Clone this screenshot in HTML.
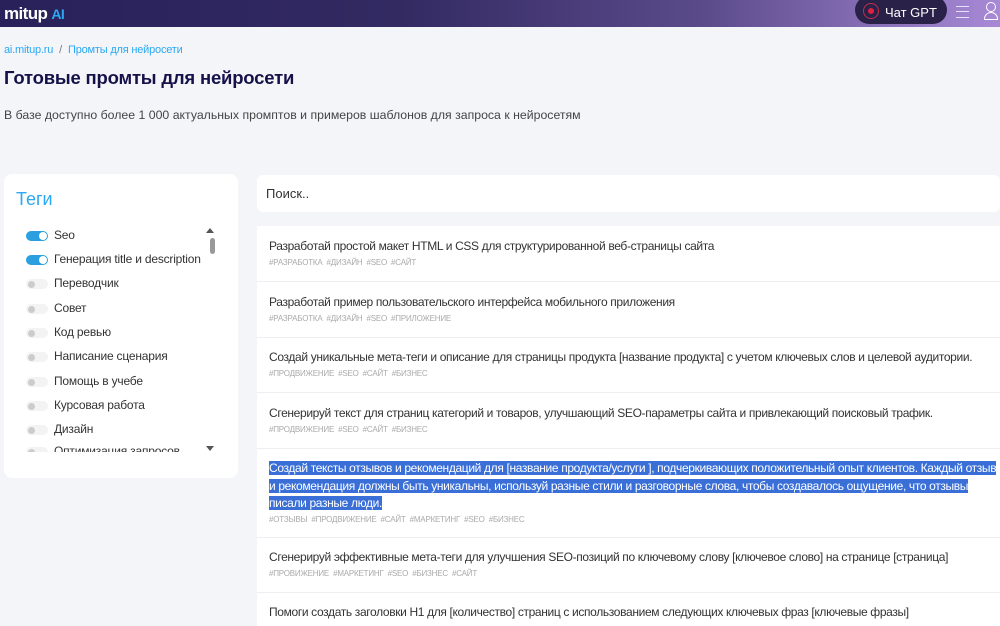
<!DOCTYPE html>
<html><head><meta charset="utf-8"><style>
*{margin:0;padding:0;box-sizing:border-box}
body{width:1000px;height:626px;overflow:hidden;background:#f4f5f9;font-family:"Liberation Sans",sans-serif;color:#333;position:relative}
.hdr{position:absolute;left:0;top:0;width:1000px;height:27px;background:linear-gradient(90deg,#28215a 0%,#332a62 40%,#5a4a8a 70%,#a889d6 100%)}
.logo{position:absolute;left:4px;top:4px;font-weight:bold;font-size:17px;color:#fff;letter-spacing:-0.6px}
.logo span{color:#2aa8f2;font-size:14px}
.gpt{position:absolute;left:855px;top:-4px;width:92px;height:28px;border-radius:14px;background:#2a2148;color:#fff;font-size:13px;padding:9px 0 0 30px}
.gpt:before{content:"";position:absolute;left:8px;top:7px;width:14px;height:14px;border-radius:50%;border:1px solid #c0304a}
.gpt:after{content:"";position:absolute;left:13px;top:12px;width:6px;height:6px;border-radius:50%;background:#e02040}
.abs{position:absolute}
.bc{left:4px;top:44px;font-size:11px;color:#2aa8f2;letter-spacing:-0.2px}
.bc i{font-style:normal;color:#777;margin:0 6px}
h1{position:absolute;left:4px;top:67px;font-size:18.5px;color:#15124a;font-weight:bold;letter-spacing:-0.2px}
.desc{left:4px;top:108px;font-size:12.3px;color:#444;letter-spacing:0}
.tags{left:4px;top:174px;width:234px;height:304px;background:#fff;border-radius:8px}
.tags h2{position:absolute;left:12px;top:15px;font-size:18px;color:#2aa8f2;font-weight:normal}
.row{position:absolute;left:22px;font-size:12px;color:#333;letter-spacing:-0.2px}
.tg{display:inline-block;width:22px;height:10px;border-radius:5px;background:#f3f3f3;position:relative;vertical-align:middle;margin-right:6px}
.tg:after{content:"";position:absolute;left:2px;top:2px;width:7px;height:7px;border-radius:50%;background:#ccc}
.tg.on{background:#2b9fe0}
.tg.on:after{left:13px;top:1px;width:8px;height:8px;background:#fff}
.sb{position:absolute;left:206px;top:64px;width:5px;height:16px;background:#999;border-radius:3px}
.search{left:257px;top:175px;width:743px;height:37px;background:#fff;border-radius:6px;font-size:13px;color:#333;padding:11px 9px}
.list{left:257px;top:226px;width:743px;height:400px;background:#fff}
.it{position:absolute;left:12px;font-size:12px;color:#333;line-height:17.5px;letter-spacing:-0.35px;white-space:nowrap;margin-top:1px}
.it b{display:block;font-weight:normal;font-size:8px;color:#aaa;line-height:12px;margin-top:1px;word-spacing:2px;letter-spacing:-0.2px}
.sep{position:absolute;left:0;width:743px;height:1px;background:#eceef2}
.hl{background:#3a6fd8;color:#fff}
</style></head><body>
<div class="hdr"><div class="logo">mitup <span>AI</span></div>
<div class="gpt">Чат GPT</div>
<div class="abs" style="left:956px;top:6px;width:13px;height:12px;border-top:1.5px solid #e8e0f8;border-bottom:1.5px solid #e8e0f8"><div style="margin-top:3.5px;height:1.5px;background:#e8e0f8"></div></div>
<div class="abs" style="left:986px;top:2px;width:10px;height:10px;border:1.5px solid #fff;border-radius:50%"></div>
<div class="abs" style="left:984px;top:12px;width:14px;height:8px;border:1.5px solid #fff;border-radius:7px 7px 0 0"></div>
</div>
<div class="abs bc">ai.mitup.ru<i>/</i>Промты для нейросети</div>
<h1>Готовые промты для нейросети</h1>
<div class="abs desc">В базе доступно более 1 000 актуальных промптов и примеров шаблонов для запроса к нейросетям</div>
<div class="abs tags"><h2>Теги</h2>
<div class="row" style="top:54px"><span class="tg on"></span>Seo</div>
<div class="row" style="top:78px"><span class="tg on"></span>Генерация title и description</div>
<div class="row" style="top:102px"><span class="tg"></span>Переводчик</div>
<div class="row" style="top:127px"><span class="tg"></span>Совет</div>
<div class="row" style="top:151px"><span class="tg"></span>Код ревью</div>
<div class="row" style="top:175px"><span class="tg"></span>Написание сценария</div>
<div class="row" style="top:200px"><span class="tg"></span>Помощь в учебе</div>
<div class="row" style="top:224px"><span class="tg"></span>Курсовая работа</div>
<div class="row" style="top:248px"><span class="tg"></span>Дизайн</div>
<div class="row" style="top:270px;height:8px;overflow:hidden"><span class="tg"></span>Оптимизация запросов</div>
<div class="abs" style="left:202px;top:54px;border:4px solid transparent;border-bottom:5px solid #555;border-top:0"></div>
<div class="sb"></div>
<div class="abs" style="left:202px;top:272px;border:4px solid transparent;border-top:5px solid #555;border-bottom:0"></div>
</div>
<div class="abs search">Поиск..</div>
<div class="abs list">
<div class="it" style="top:11px">Разработай простой макет HTML и CSS для структурированной веб-страницы сайта<b>#РАЗРАБОТКА #ДИЗАЙН #SEO #САЙТ</b></div>
<div class="sep" style="top:55px"></div>
<div class="it" style="top:67px">Разработай пример пользовательского интерфейса мобильного приложения<b>#РАЗРАБОТКА #ДИЗАЙН #SEO #ПРИЛОЖЕНИЕ</b></div>
<div class="sep" style="top:111px"></div>
<div class="it" style="top:122px">Создай уникальные мета-теги и описание для страницы продукта [название продукта] с учетом ключевых слов и целевой аудитории.<b>#ПРОДВИЖЕНИЕ #SEO #САЙТ #БИЗНЕС</b></div>
<div class="sep" style="top:166px"></div>
<div class="it" style="top:178px">Сгенерируй текст для страниц категорий и товаров, улучшающий SEO-параметры сайта и привлекающий поисковый трафик.<b>#ПРОДВИЖЕНИЕ #SEO #САЙТ #БИЗНЕС</b></div>
<div class="sep" style="top:222px"></div>
<div class="it" style="top:233px"><span class="hl">Создай тексты отзывов и рекомендаций для [название продукта/услуги ], подчеркивающих положительный опыт клиентов. Каждый отзыв</span><br><span class="hl">и рекомендация должны быть уникальны, используй разные стили и разговорные слова, чтобы создавалось ощущение, что отзывы</span><br><span class="hl">писали разные люди.</span><b>#ОТЗЫВЫ #ПРОДВИЖЕНИЕ #САЙТ #МАРКЕТИНГ #SEO #БИЗНЕС</b></div>
<div class="sep" style="top:311px"></div>
<div class="it" style="top:322px">Сгенерируй эффективные мета-теги для улучшения SEO-позиций по ключевому слову [ключевое слово] на странице [страница]<b>#ПРОВИЖЕНИЕ #МАРКЕТИНГ #SEO #БИЗНЕС #САЙТ</b></div>
<div class="sep" style="top:366px"></div>
<div class="it" style="top:377px">Помоги создать заголовки H1 для [количество] страниц с использованием следующих ключевых фраз [ключевые фразы]</div>
</div>
</body></html>
